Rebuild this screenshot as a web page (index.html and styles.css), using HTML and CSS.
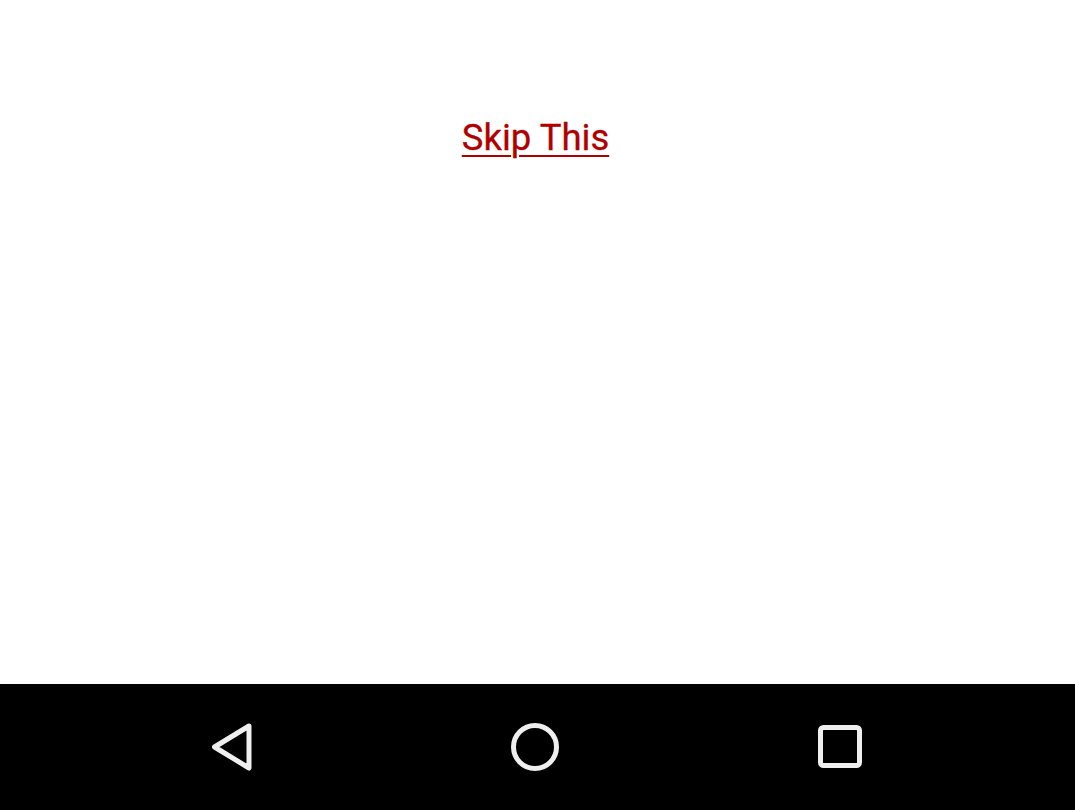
FILE: index.html
```html
<!DOCTYPE html>
<html>
<head>
<meta charset="utf-8">
<link rel="stylesheet" href="styles.css">
</head>
<body>
<div class="screen">
  <main class="content">
    <a class="skip" href="#">Skip This</a>
  </main>
  <nav class="navbar">
    <svg class="nav-icon" viewBox="0 0 48 48" width="48" height="48">
      <path d="M43 3 L8.5 24 L43 45 Z" fill="none" stroke="#efefef" stroke-width="5" stroke-linejoin="round"/>
    </svg>
    <svg class="nav-icon" viewBox="0 0 48 48" width="48" height="48">
      <circle cx="24" cy="24" r="21.5" fill="none" stroke="#efefef" stroke-width="5"/>
    </svg>
    <svg class="nav-icon" viewBox="0 0 48 48" width="48" height="48">
      <rect x="4.5" y="4.5" width="39" height="38" rx="3" fill="none" stroke="#efefef" stroke-width="5"/>
    </svg>
  </nav>
</div>
</body>
</html>
```
FILE: styles.css
```css
html, body {
  margin: 0;
  padding: 0;
  background: #ffffff;
}
.screen {
  width: 1075px;
  height: 810px;
  display: flex;
  flex-direction: column;
  overflow: hidden;
}
.content {
  flex: 1;
  display: flex;
  justify-content: center;
  align-items: flex-start;
  padding-top: 117px;
  padding-right: 4px;
}
.skip {
  font-family: Roboto, "Liberation Sans", sans-serif;
  font-size: 36.5px;
  line-height: 42px;
  color: #b00000;
  text-decoration: underline;
  text-decoration-thickness: 2px;
  text-underline-offset: 5px;
  -webkit-text-stroke: 0.3px #b00000;
}
.navbar {
  height: 126px;
  background: #000000;
  display: flex;
  justify-content: center;
  align-items: center;
  gap: 257px;
  padding-right: 6px;
}
.nav-icon {
  display: block;
  width: 48px;
  height: 48px;
}
```
